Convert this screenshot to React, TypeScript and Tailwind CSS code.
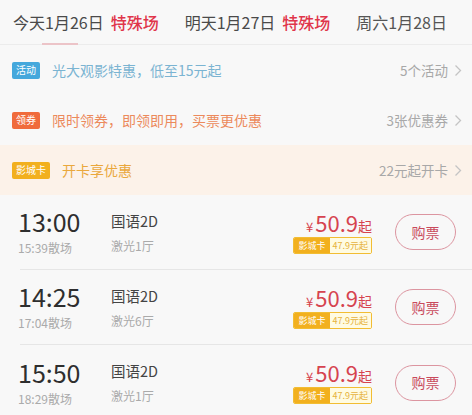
import React from 'react';

const font = { fontFamily: '"Noto Sans CJK SC", "Noto Sans", sans-serif' };

const shows = [
  { time: '13:00', end: '15:39散场', hall: '激光1厅' },
  { time: '14:25', end: '17:04散场', hall: '激光6厅' },
  { time: '15:50', end: '18:29散场', hall: '激光1厅' },
];

function Chevron() {
  return (
    <svg width="8" height="13" viewBox="0 0 8 13" className="ml-1.5">
      <path d="M1.5 1.5 L6.5 6.5 L1.5 11.5" fill="none" stroke="#c4c4c4" strokeWidth="1.3" />
    </svg>
  );
}

function PromoRow({ tag, tagClass, text, textClass, right, rowClass = '' }: {
  tag: string; tagClass: string; text: string; textClass: string; right: string; rowClass?: string;
}) {
  return (
    <div className={`flex items-center h-[50px] pl-3 pr-[10px] ${rowClass}`}>
      <span className={`h-[17px] px-[4px] flex items-center text-[10px] leading-none text-white rounded-[2px] ${tagClass}`}>{tag}</span>
      <span className={`ml-3 text-[14px] ${textClass}`}>{text}</span>
      <span className="ml-auto flex items-center text-[13.5px] text-[#a8a8a8]">{right}<Chevron /></span>
    </div>
  );
}

export default function App() {
  return (
    <div className="w-[472px] h-[415px] overflow-hidden bg-[#f8f8f8]" style={font}>
      {/* date tabs */}
      <div className="relative h-[45px] border-b border-[#ececec] flex items-center pl-[13px] text-[16px] text-[#4a4a4a]">
        <span>今天1月26日</span>
        <span className="ml-[7px] text-[#e0354a] font-medium">特殊场</span>
        <span className="ml-[26px]">明天1月27日</span>
        <span className="ml-[7px] text-[#e0354a] font-medium">特殊场</span>
        <span className="ml-[26px] text-[#555]">周六1月28日</span>
        <div className="absolute left-[42px] bottom-[-1px] w-[36px] h-[2px] bg-[#ecc4c8]" />
      </div>

      <PromoRow tag="活动" tagClass="bg-[#45a8dc]" text="光大观影特惠，低至15元起" textClass="text-[#7bb4d2]" right="5个活动" />
      <PromoRow tag="领券" tagClass="bg-[#f06b3c]" text="限时领券，即领即用，买票更优惠" textClass="text-[#ec8a5c]" right="3张优惠券" />
      <PromoRow tag="影城卡" tagClass="bg-[#f2b01e]" text="开卡享优惠" textClass="text-[#eaa83c]" right="22元起开卡" rowClass="bg-[#fcf2e9]" />

      {shows.map((s, i) => (
        <div key={s.time} className="ml-5 h-[75px] flex items-center border-b border-[#e6e6e6]" style={i === shows.length - 1 ? { borderBottom: 'none' } : undefined}>
          <div className="w-[93px] -ml-[2px]">
            <div className="text-[25px] leading-[28px] text-[#2e2e2e]">{s.time}</div>
            <div className="text-[12px] leading-[18px] text-[#aaa] mt-[4px]">{s.end}</div>
          </div>
          <div>
            <div className="text-[14.5px] leading-[22px] text-[#444]">国语2D</div>
            <div className="text-[12px] leading-[18px] text-[#aaa] mt-[5px]">{s.hall}</div>
          </div>
          <div className="ml-auto flex flex-col items-end mr-[23px]">
            <div className="flex items-baseline text-[#d6434f] leading-none">
              <span className="text-[13px] mr-[2px]">¥</span>
              <span className="text-[22px]">50.9</span>
              <span className="text-[14px]">起</span>
            </div>
            <div className="mt-[4px] flex h-[17px] text-[9px] leading-none rounded-[2px] overflow-hidden border border-[#f2bd33]">
              <span className="bg-[#f2b01e] text-white px-[4px] flex items-center">影城卡</span>
              <span className="bg-[#fffbe2] text-[#e6b23c] px-[3px] flex items-center">47.9元起</span>
            </div>
          </div>
          <button className="mr-4 w-[61px] h-[36px] rounded-full border-[1.5px] border-[#dc95a0] text-[14px] text-[#c94a5c] flex items-center justify-center">购票</button>
        </div>
      ))}
    </div>
  );
}
